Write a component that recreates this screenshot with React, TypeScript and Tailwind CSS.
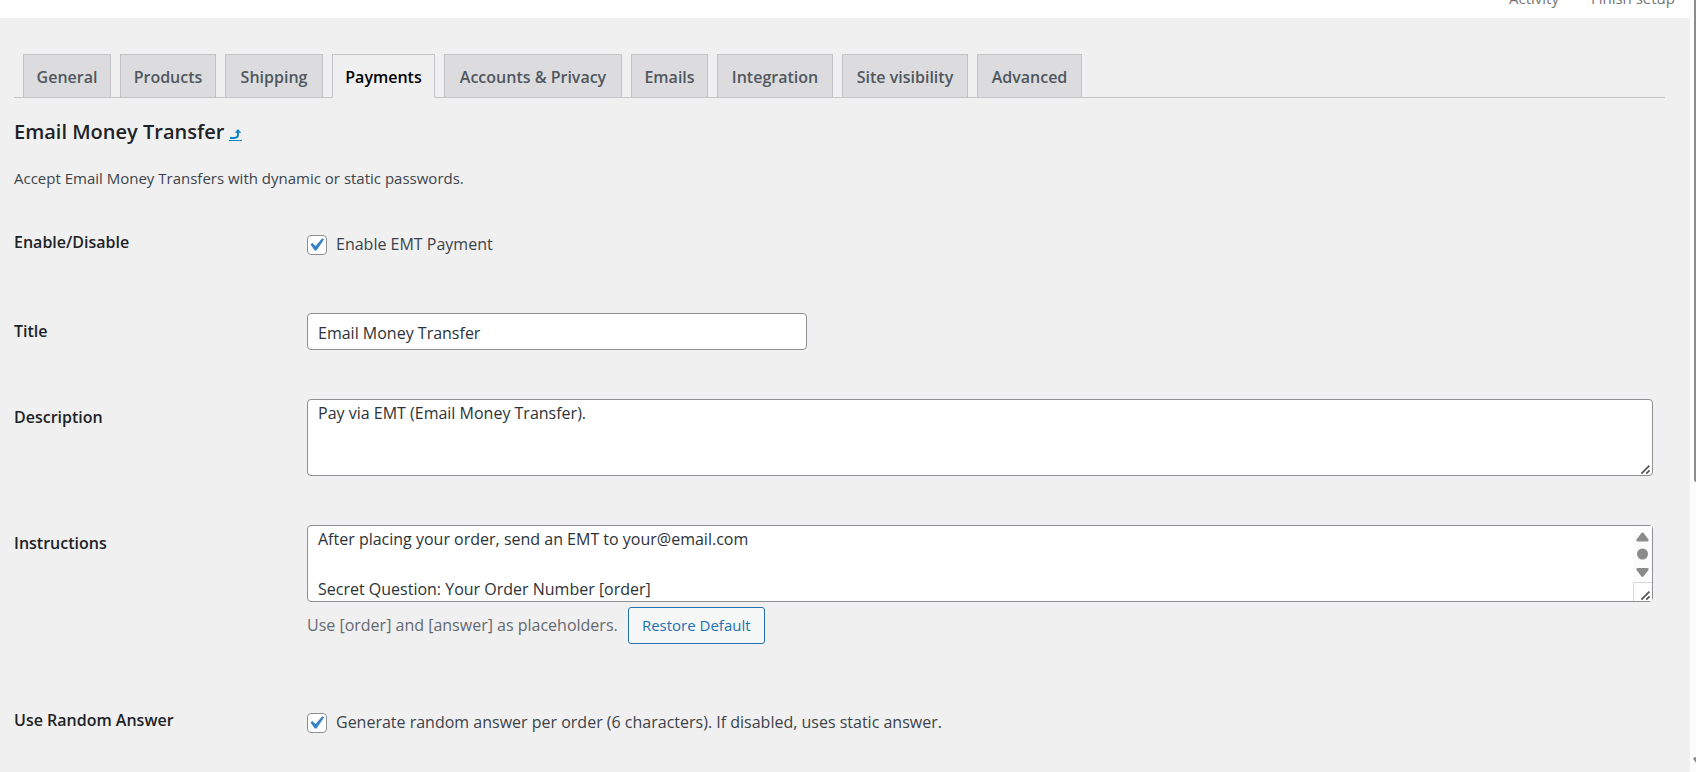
import type { ReactNode } from "react";

const TABS = [
  { label: "General", width: "min-w-[88px]" },
  { label: "Products", width: "min-w-[96px]" },
  { label: "Shipping", width: "min-w-[98px]" },
  { label: "Payments", width: "min-w-[103px]", active: true },
  { label: "Accounts & Privacy", width: "min-w-[178px]" },
  { label: "Emails", width: "min-w-[77px]" },
  { label: "Integration", width: "min-w-[116px]" },
  { label: "Site visibility", width: "min-w-[126px]" },
  { label: "Advanced", width: "min-w-[105px]" },
];

const INSTRUCTIONS = `After placing your order, send an EMT to your@email.com

Secret Question: Your Order Number [order]
Secret Answer: [answer]`;

const TEXTAREA =
  "block h-[77px] w-full resize-none overflow-hidden rounded border border-[#8c8f94] bg-white px-[10px] py-px text-[16px] leading-[25px] text-[#2c3338]";

export default function App() {
  return (
    <div className="flex min-h-screen bg-[#f0f0f0] font-['Open_Sans','Noto_Sans',sans-serif] text-[#3c434a]">
      <div className="min-w-0 flex-1">
        <header className="flex h-[18px] items-end justify-end gap-8 overflow-hidden bg-white pr-[15px] pb-[10px] text-[15px] leading-5 text-[#757575]">
          <a href="#activity">Activity</a>
          <a href="#setup">Finish setup</a>
        </header>

        <main className="pt-9 pr-[25px] pl-[14px]">
          <nav className="flex gap-[9px] border-b border-[#c3c4c7] pl-[9px]">
            {TABS.map((tab) => (
              <a
                key={tab.label}
                href="#tab"
                aria-current={tab.active ? "page" : undefined}
                className={`${tab.width} -mb-px h-11 whitespace-nowrap border pt-[10px] text-center text-[16px] leading-[25px] font-semibold ${
                  tab.active
                    ? "border-[#c3c4c7] border-b-[#f0f0f0] bg-[#f0f0f0] text-black"
                    : "border-[#c3c4c7] bg-[#dcdcde] text-[#50575e]"
                }`}
              >
                {tab.label}
              </a>
            ))}
          </nav>

          <h2 className="mt-5 flex gap-[5px] text-[20px] leading-7 font-semibold text-[#1d2327]">
            Email Money Transfer
            <ReturnLink />
          </h2>
          <p className="mt-5 text-[15px] leading-6">
            Accept Email Money Transfers with dynamic or static passwords.
          </p>

          <form className="mt-[15px]">
            <Row id="enabled" label="Enable/Disable">
              <CheckField id="enabled">Enable EMT Payment</CheckField>
            </Row>
            <Row id="title" label="Title">
              <input
                id="title"
                defaultValue="Email Money Transfer"
                className="block h-[37px] w-[500px] rounded border border-[#8c8f94] bg-white px-[10px] pt-[2px] text-[16px] text-[#2c3338]"
              />
            </Row>
            <Row id="description" label="Description">
              <div className="relative">
                <textarea
                  id="description"
                  className={TEXTAREA}
                  defaultValue="Pay via EMT (Email Money Transfer)."
                />
                <ResizeGrip />
              </div>
            </Row>
            <Row id="instructions" label="Instructions">
              <div className="relative">
                <textarea id="instructions" className={TEXTAREA} defaultValue={INSTRUCTIONS} />
                <ScrollRail />
                <ResizeGrip />
              </div>
              <p className="mt-[5px] mb-[9px] flex items-center gap-[10px] text-[16px] leading-[25px] text-[#646970]">
                Use [order] and [answer] as placeholders.
                <button
                  type="button"
                  className="h-[37px] w-[137px] rounded-[3px] border border-[#2271b1] bg-[#f6f7f7] text-[15px] text-[#2271b1]"
                >
                  Restore Default
                </button>
              </p>
            </Row>
            <Row id="random" label="Use Random Answer">
              <CheckField id="random">
                Generate random answer per order (6 characters). If disabled, uses static answer.
              </CheckField>
            </Row>
          </form>
        </main>
      </div>

      <PageScrollbar />
    </div>
  );
}

function Row({ id, label, children }: { id: string; label: string; children: ReactNode }) {
  return (
    <div className="flex">
      <label
        htmlFor={id}
        className="w-[293px] shrink-0 pt-[25px] text-[16px] leading-[25px] font-semibold text-[#1d2327]"
      >
        {label}
      </label>
      <div className="min-w-0 flex-1 pt-[19px] pr-3 pb-[30px]">{children}</div>
    </div>
  );
}

function CheckField({ id, children }: { id: string; children: ReactNode }) {
  return (
    <label className="flex items-center gap-[9px] pt-[8px] pb-[7px] text-[16px] leading-[25px]">
      <span className="relative flex">
        <input
          id={id}
          type="checkbox"
          defaultChecked
          className="peer size-5 appearance-none rounded border border-[#8c8f94] bg-white"
        />
        <svg
          viewBox="0 0 20 20"
          className="pointer-events-none absolute -top-[3px] -left-1 hidden size-[26px] peer-checked:block"
        >
          <path
            d="M14.83 4.89l1.34.94-5.81 8.38H9.02L5.78 9.67l1.34-1.25 2.57 2.4z"
            fill="#3582c4"
          />
        </svg>
      </span>
      {children}
    </label>
  );
}

function ReturnLink() {
  return (
    <a href="#payments" aria-label="Return to payments" className="pt-[10px] text-[#0a85c7]">
      <svg viewBox="0 0 13 13" className="size-[13px]" fill="none" stroke="currentColor">
        <path d="M1 9.900h4.300q3.700 0 3.700-3.400V3.500" strokeWidth="2" />
        <path d="M5.700 4.800 9 1l3.300 3.800z" fill="currentColor" stroke="none" />
        <path d="M0 12.500h13" />
      </svg>
    </a>
  );
}

function ResizeGrip() {
  return (
    <svg
      viewBox="0 0 12 12"
      className="pointer-events-none absolute right-[2px] bottom-[1px] size-3"
      stroke="#50504f"
      strokeWidth="1.600"
    >
      <path d="M2.400 10.600l8-8M7.300 10.600l3.200-3.200" />
    </svg>
  );
}

function ScrollRail() {
  return (
    <div className="absolute top-px right-px bottom-px flex w-[19px] flex-col bg-[#fcfcfc]">
      <svg viewBox="0 0 19 56" className="h-14 w-[19px]" fill="#8b8b8b">
        <path d="M8.300 7.200q1.200-1.400 2.400 0l4.800 6.300q.7 2-1 2h-10q-1.700 0-1-2z" />
        <circle cx="9.500" cy="28" r="5.500" />
        <path d="M8.300 50.300q1.200 1.400 2.400 0l4.800-6.300q.7-2-1-2h-10q-1.700 0-1 2z" />
      </svg>
      <div className="flex-1 border-t border-l border-[#d9d9d9] bg-white" />
    </div>
  );
}

function PageScrollbar() {
  return (
    <div className="flex w-[6px] flex-col items-end justify-between overflow-hidden bg-[#fcfcfc]">
      <div className="h-[482px] w-[2px] rounded-bl-sm bg-[#8b8b8b]" />
      <svg viewBox="0 0 3 6" className="mb-[9px] h-[6px] w-[3px]" fill="#8b8b8b">
        <path d="M0 1.500Q.2 0 3 0v6z" />
      </svg>
    </div>
  );
}
